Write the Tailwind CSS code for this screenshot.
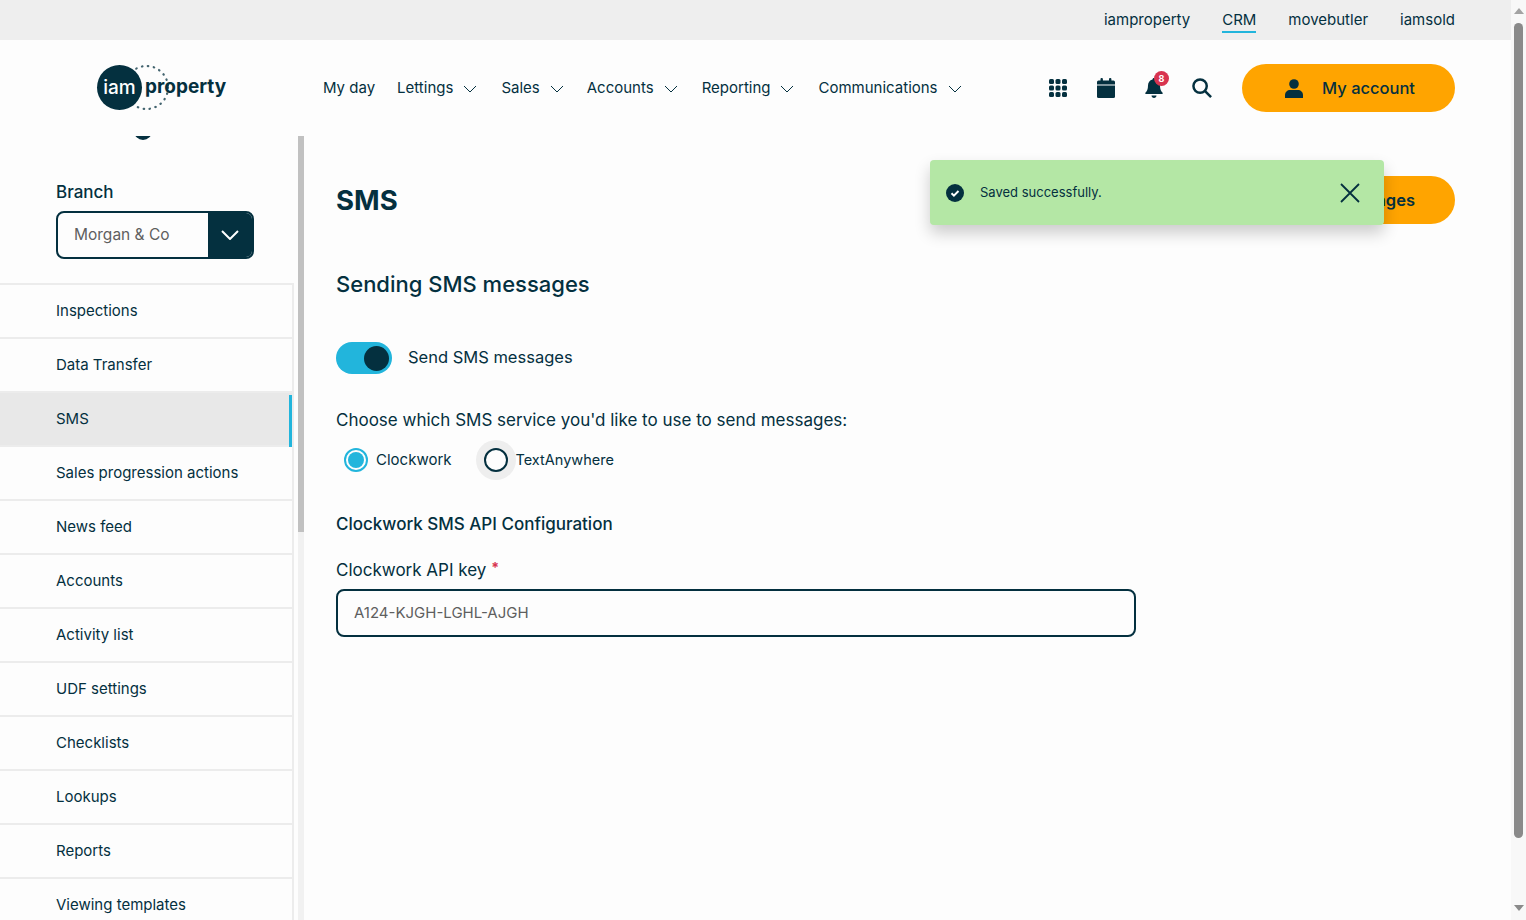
<!doctype html>
<html>
<head>
<meta charset="utf-8">
<script src="https://cdn.jsdelivr.net/npm/@tailwindcss/browser@4"></script>
</head>
<body class="h-[920px] w-[1526px] overflow-hidden bg-[#fdfdfd] font-['Inter',sans-serif] text-[#04303f]">
<div class="flex h-[920px]">
  <!-- page -->
  <div class="relative w-[1511px] shrink-0">
    <!-- brand bar -->
    <div class="flex h-10 items-center justify-end gap-8 bg-[#eeeeee] pr-14 text-[15px]">
      <a>iamproperty</a>
      <a class="mt-[2px] border-b-2 border-[#22b5dc] leading-[22px]">CRM</a>
      <a>movebutler</a>
      <a>iamsold</a>
    </div>

    <!-- main nav -->
    <div class="flex h-24 items-center">
      <div class="ml-[96px] flex w-[227px] shrink-0 items-center">
        <svg width="132" height="48" viewBox="0 0 132 48">
          <circle cx="50.500" cy="23.500" r="21.500" fill="none" stroke="#43646f" stroke-width="2.200" stroke-linecap="round" stroke-dasharray="0.5 5.500"/>
          <circle cx="23.500" cy="23.500" r="22.500" fill="#04303f"/>
          <text x="23.500" y="30" text-anchor="middle" fill="#fff" font-size="19" font-weight="500" font-family="Inter">iam</text>
          <text x="49" y="29" fill="#04303f" font-size="19" font-weight="700" font-family="Inter">property</text>
        </svg>
      </div>
      <nav class="flex items-center text-[15px]">
        <a class="mr-[22px]">My day</a>
        <a class="mr-6 flex items-center gap-[10px]">Lettings
          <svg class="mt-[2px]" width="14" height="8" viewBox="0 0 14 8" fill="none" stroke="#04303f" stroke-width="1"><path d="M1 1l6 6 6-6"/></svg>
        </a>
        <a class="mr-[23px] flex items-center gap-[10px]">Sales
          <svg class="mt-[2px]" width="14" height="8" viewBox="0 0 14 8" fill="none" stroke="#04303f" stroke-width="1"><path d="M1 1l6 6 6-6"/></svg>
        </a>
        <a class="mr-6 flex items-center gap-[10px]">Accounts
          <svg class="mt-[2px]" width="14" height="8" viewBox="0 0 14 8" fill="none" stroke="#04303f" stroke-width="1"><path d="M1 1l6 6 6-6"/></svg>
        </a>
        <a class="mr-6 flex items-center gap-[10px]">Reporting
          <svg class="mt-[2px]" width="14" height="8" viewBox="0 0 14 8" fill="none" stroke="#04303f" stroke-width="1"><path d="M1 1l6 6 6-6"/></svg>
        </a>
        <a class="flex items-center gap-[10px]">Communications
          <svg class="mt-[2px]" width="14" height="8" viewBox="0 0 14 8" fill="none" stroke="#04303f" stroke-width="1"><path d="M1 1l6 6 6-6"/></svg>
        </a>
      </nav>
      <div class="ml-auto flex items-center pr-14">
        <div class="mr-[30px] flex items-center gap-[30px]">
          <svg width="18" height="18" viewBox="0 0 18 18" fill="#04303f">
            <rect x="0" y="0" width="5" height="5" rx="1.500"/><rect x="6.500" y="0" width="5" height="5" rx="1.500"/><rect x="13" y="0" width="5" height="5" rx="1.500"/>
            <rect x="0" y="6.500" width="5" height="5" rx="1.500"/><rect x="6.500" y="6.500" width="5" height="5" rx="1.500"/><rect x="13" y="6.500" width="5" height="5" rx="1.500"/>
            <rect x="0" y="13" width="5" height="5" rx="1.500"/><rect x="6.500" y="13" width="5" height="5" rx="1.500"/><rect x="13" y="13" width="5" height="5" rx="1.500"/>
          </svg>
          <svg width="18" height="20" viewBox="0 0 18 20" fill="#04303f">
            <rect x="0" y="2.500" width="18" height="17.500" rx="1.500"/>
            <rect x="3.500" y="0" width="2.400" height="4" rx="1"/><rect x="12" y="0" width="2.400" height="4" rx="1"/>
            <rect x="0" y="6.500" width="18" height="1" fill="#fdfdfd"/>
          </svg>
          <div class="relative h-5 w-[18px]">
            <svg width="18" height="20" viewBox="0 0 18 20" fill="#04303f">
              <path d="M9 0c1 0 1.500.7 1.500 1.600C13.400 2.300 15 4.700 15 7.500c0 4 1 5.500 2.600 7.300.5.6.1 1.200-.6 1.200H1c-.7 0-1.100-.6-.6-1.200C2 13 3 11.500 3 7.500c0-2.800 1.600-5.200 4.500-5.900C7.500.7 8 0 9 0z"/>
              <path d="M6.500 17.500h5C11.500 19 10.400 20 9 20s-2.500-1-2.500-2.500z"/>
            </svg>
            <span class="absolute -top-[7px] left-[9px] flex h-[15px] w-[15px] items-center justify-center rounded-full bg-[#d8344f] text-[9px] leading-none font-bold text-white">8</span>
          </div>
          <svg class="-ml-[1px]" width="20" height="20" viewBox="0 0 21 21" fill="none" stroke="#04303f" stroke-width="2.600">
            <circle cx="8.500" cy="8.500" r="7"/><path d="M13.500 13.500l6.500 6.500"/>
          </svg>
        </div>
        <button class="flex h-12 w-[213px] items-center justify-end gap-[19px] rounded-3xl bg-[#ffa400] pr-10 text-[16.5px] font-medium">
          <svg width="18" height="19" viewBox="0 0 18 19" fill="#04303f">
            <circle cx="9" cy="5" r="4.800"/><path d="M0 19v-3c0-3 2.500-5 5-5h8c2.500 0 5 2 5 5v3z"/>
          </svg>
          <span>My account</span>
        </button>
      </div>
    </div>

    <!-- body -->
    <div class="flex h-[784px] overflow-hidden">
      <!-- sidebar -->
      <aside class="relative h-full w-[298px] shrink-0 overflow-hidden">
        <div class="absolute left-[134px] -top-[14px] h-[18px] w-[18px] rounded-full bg-[#04303f]"></div>
        <div class="pl-14 pt-[45px]">
          <label class="block text-[17px] leading-[22px] font-medium">Branch</label>
          <div class="mt-2 flex h-12 w-[198px] overflow-hidden rounded-lg border-2 border-[#04303f]">
            <span class="flex flex-1 items-center pl-4 text-[15.500px] text-[#5f5f5f]">Morgan &amp; Co</span>
            <span class="flex w-[44px] items-center justify-center bg-[#04303f]">
              <svg width="18" height="10" viewBox="0 0 18 10" fill="none" stroke="#fff" stroke-width="2"><path d="M1 1l8 8 8-8"/></svg>
            </span>
          </div>
        </div>
        <ul class="mt-6 w-[294px] border-y-2 border-r-2 border-[#ececec] text-[15px]">
          <li class="flex h-[54px] items-center border-b-2 border-[#ececec] pl-14">Inspections</li>
          <li class="flex h-[54px] items-center border-b-2 border-[#ececec] pl-14">Data Transfer</li>
          <li class="relative flex h-[54px] items-center border-b-2 border-[#ececec] bg-[#e8e8e8] pl-14">SMS
            <span class="absolute top-[2px] right-0 h-[52px] w-[3px] bg-[#22b5dc]"></span>
          </li>
          <li class="flex h-[54px] items-center border-b-2 border-[#ececec] pl-14">Sales progression actions</li>
          <li class="flex h-[54px] items-center border-b-2 border-[#ececec] pl-14">News feed</li>
          <li class="flex h-[54px] items-center border-b-2 border-[#ececec] pl-14">Accounts</li>
          <li class="flex h-[54px] items-center border-b-2 border-[#ececec] pl-14">Activity list</li>
          <li class="flex h-[54px] items-center border-b-2 border-[#ececec] pl-14">UDF settings</li>
          <li class="flex h-[54px] items-center border-b-2 border-[#ececec] pl-14">Checklists</li>
          <li class="flex h-[54px] items-center border-b-2 border-[#ececec] pl-14">Lookups</li>
          <li class="flex h-[54px] items-center border-b-2 border-[#ececec] pl-14">Reports</li>
          <li class="flex h-[54px] items-center border-b-2 border-[#ececec] pl-14">Viewing templates</li>
        </ul>
      </aside>
      <!-- sidebar scrollbar -->
      <div class="h-full w-[6px] shrink-0 bg-[#f1f1f1]">
        <div class="h-[396px] bg-[#c1c1c1]"></div>
      </div>

      <!-- content -->
      <main class="relative flex-1 pl-8 pr-14 pt-10">
        <div class="flex items-center justify-between">
          <h1 class="text-[27.500px] leading-[48px] font-bold">SMS</h1>
          <button class="h-12 w-[200px] rounded-3xl bg-[#ffa400] pr-10 text-right text-[16.500px] font-semibold">Save changes</button>
        </div>
        <h2 class="mt-[42px] text-[22px] leading-[36px] font-medium">Sending SMS messages</h2>
        <div class="mt-10 flex items-center gap-4">
          <div class="flex h-8 w-14 items-center justify-end rounded-2xl bg-[#22b5dc] pr-[3px]">
            <span class="h-[25px] w-[25px] rounded-full bg-[#04303f]"></span>
          </div>
          <span class="pb-[2px] text-[16.500px]">Send SMS messages</span>
        </div>
        <p class="mt-[34px] text-[17px] leading-6">Choose which SMS service you'd like to use to send messages:</p>
        <div class="mt-2 flex h-10 items-center text-[15px]">
          <span class="ml-2 flex h-6 w-6 items-center justify-center rounded-full border-2 border-[#22b5dc]">
            <span class="h-4 w-4 rounded-full bg-[#22b5dc]"></span>
          </span>
          <span class="ml-2">Clockwork</span>
          <span class="ml-6 flex h-10 w-10 items-center justify-center rounded-full bg-[#eeeeee]">
            <span class="h-6 w-6 rounded-full border-2 border-[#04303f] bg-[#fdfdfd]"></span>
          </span>
          <span class="text-[14.500px]">TextAnywhere</span>
        </div>
        <h3 class="mt-[32px] text-[17px] leading-6 font-medium">Clockwork SMS API Configuration</h3>
        <label class="mt-[22px] block text-[17px] leading-6">Clockwork API key <span class="relative -top-[3px] text-[14px] font-bold text-[#d8344f]">*</span></label>
        <div class="mt-[6px] flex h-12 w-[800px] items-center rounded-lg border-2 border-[#04303f] pl-4 text-[15px] text-[#5f5f5f]">A124-KJGH-LGHL-AJGH</div>

        <!-- toast -->
        <div class="absolute left-[626px] top-6 flex h-[65px] w-[454px] items-center rounded-sm bg-[#b4e7a5] pr-6 pl-4 shadow-[0_8px_16px_rgba(0,0,0,0.2)]">
          <svg width="18" height="18" viewBox="0 0 18 18"><circle cx="9" cy="9" r="9" fill="#04303f"/><path d="M5.500 9.300l2.400 2.300 4.600-4.600" fill="none" stroke="#fff" stroke-width="2"/></svg>
          <span class="ml-4 text-[13px]">Saved successfully.</span>
          <svg class="ml-auto" width="20" height="20" viewBox="0 0 20 20" fill="none" stroke="#04303f" stroke-width="1.800"><path d="M1 1l18 18M19 1L1 19"/></svg>
        </div>
      </main>
    </div>
  </div>

  <!-- window scrollbar -->
  <div class="flex h-[920px] w-[15px] shrink-0 flex-col items-center bg-[#f8f8f8]">
    <div class="mt-[8px] h-0 w-0 border-x-[5px] border-b-[6px] border-x-transparent border-b-[#a3a3a3]"></div>
    <div class="mt-[9px] h-[815px] w-[9px] rounded-[5px] bg-[#8a8a8a]"></div>
    <div class="mt-[67px] h-0 w-0 border-x-[5px] border-t-[6px] border-x-transparent border-t-[#8a8a8a]"></div>
  </div>
</div>
</body>
</html>
